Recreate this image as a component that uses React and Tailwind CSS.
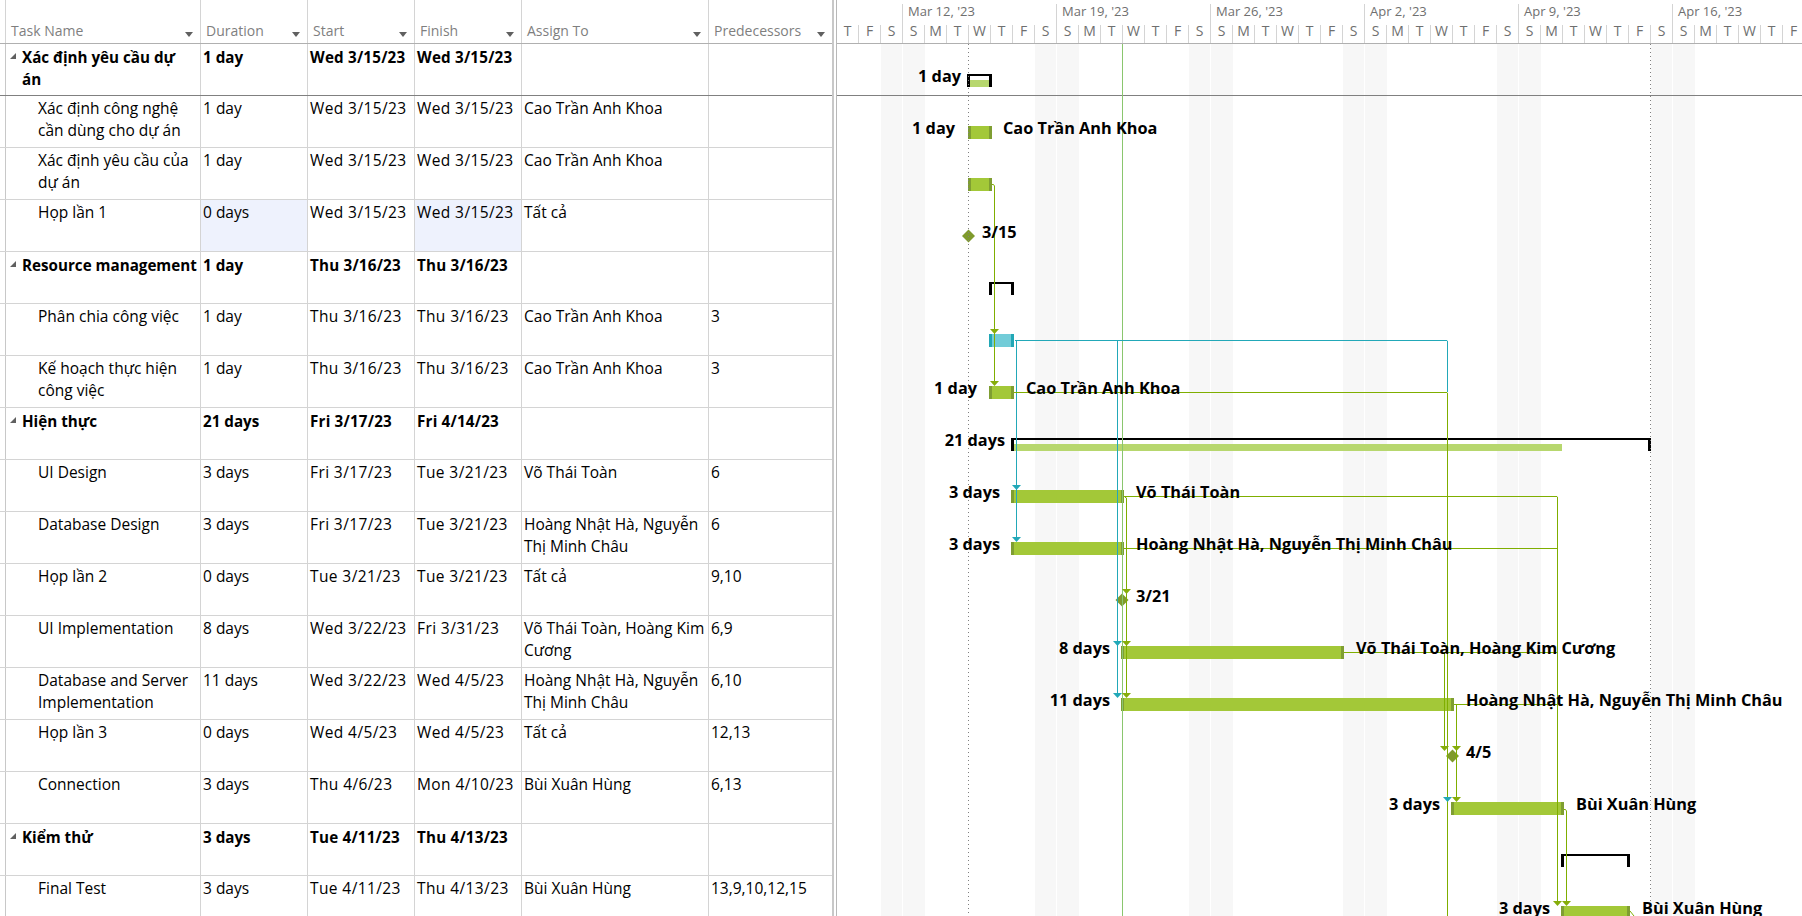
import React from "react";

const font = { fontFamily: '"Open Sans", "Noto Sans", sans-serif' };

const rows = [
  { name: "Xác định yêu cầu dự\nán", dur: "1 day", start: "Wed 3/15/23", end: "Wed 3/15/23", summary: true, strong: true },
  { name: "Xác định công nghệ\ncần dùng cho dự án", dur: "1 day", start: "Wed 3/15/23", end: "Wed 3/15/23", who: "Cao Trần Anh Khoa" },
  { name: "Xác định yêu cầu của\ndự án", dur: "1 day", start: "Wed 3/15/23", end: "Wed 3/15/23", who: "Cao Trần Anh Khoa" },
  { name: "Họp lần 1", dur: "0 days", start: "Wed 3/15/23", end: "Wed 3/15/23", who: "Tất cả", mark: true },
  { name: "Resource management", dur: "1 day", start: "Thu 3/16/23", end: "Thu 3/16/23", summary: true },
  { name: "Phân chia công việc", dur: "1 day", start: "Thu 3/16/23", end: "Thu 3/16/23", who: "Cao Trần Anh Khoa", pre: "3" },
  { name: "Kế hoạch thực hiện\ncông việc", dur: "1 day", start: "Thu 3/16/23", end: "Thu 3/16/23", who: "Cao Trần Anh Khoa", pre: "3" },
  { name: "Hiện thực", dur: "21 days", start: "Fri 3/17/23", end: "Fri 4/14/23", summary: true },
  { name: "UI Design", dur: "3 days", start: "Fri 3/17/23", end: "Tue 3/21/23", who: "Võ Thái Toàn", pre: "6" },
  { name: "Database Design", dur: "3 days", start: "Fri 3/17/23", end: "Tue 3/21/23", who: "Hoàng Nhật Hà, Nguyễn\nThị Minh Châu", pre: "6" },
  { name: "Họp lần 2", dur: "0 days", start: "Tue 3/21/23", end: "Tue 3/21/23", who: "Tất cả", pre: "9,10" },
  { name: "UI Implementation", dur: "8 days", start: "Wed 3/22/23", end: "Fri 3/31/23", who: "Võ Thái Toàn, Hoàng Kim\nCương", pre: "6,9" },
  { name: "Database and Server\nImplementation", dur: "11 days", start: "Wed 3/22/23", end: "Wed 4/5/23", who: "Hoàng Nhật Hà, Nguyễn\nThị Minh Châu", pre: "6,10" },
  { name: "Họp lần 3", dur: "0 days", start: "Wed 4/5/23", end: "Wed 4/5/23", who: "Tất cả", pre: "12,13" },
  { name: "Connection", dur: "3 days", start: "Thu 4/6/23", end: "Mon 4/10/23", who: "Bùi Xuân Hùng", pre: "6,13" },
  { name: "Kiểm thử", dur: "3 days", start: "Tue 4/11/23", end: "Thu 4/13/23", summary: true },
  { name: "Final Test", dur: "3 days", start: "Tue 4/11/23", end: "Thu 4/13/23", who: "Bùi Xuân Hùng", pre: "13,9,10,12,15" },
];

const weeks = ["Mar 12, '23", "Mar 19, '23", "Mar 26, '23", "Apr 2, '23", "Apr 9, '23", "Apr 16, '23"];
const days = ["T", "F", "S", "S", "M", "T", "W", "T", "F", "S", "S", "M", "T", "W", "T", "F", "S", "S", "M", "T", "W", "T", "F", "S", "S", "M", "T", "W", "T", "F", "S", "S", "M", "T", "W", "T", "F", "S", "S", "M", "T", "W", "T", "F"];

const rowTop = (i) => 44 + 52 * i;

const bars = [
  { row: 1, x0: 968, x1: 992 },
  { row: 2, x0: 968, x1: 992 },
  { row: 5, x0: 989, x1: 1014, cyan: true },
  { row: 6, x0: 989, x1: 1014 },
  { row: 8, x0: 1011, x1: 1124 },
  { row: 9, x0: 1011, x1: 1124 },
  { row: 11, x0: 1121, x1: 1344 },
  { row: 12, x0: 1121, x1: 1454 },
  { row: 14, x0: 1451, x1: 1564 },
  { row: 16, x0: 1561, x1: 1630 },
];

const brackets = [
  { row: 0, x0: 967, x1: 992, fill: 989 },
  { row: 4, x0: 989, x1: 1014 },
  { row: 7, x0: 1011, x1: 1651, fill: 1562 },
  { row: 15, x0: 1561, x1: 1630 },
];

const diamonds = [
  [968.5, 236],
  [1122, 600],
  [1452.5, 756],
];

const greenLines = [
  "M992 184.5H993.5L994.5 186V381",
  "M1014 392.5H1447L1447.5 393V916",
  "M1124 496.5H1557L1557.5 497V901",
  "M1125 497.5H1126L1126.5 498V693",
  "M1124 548.5H1557.5",
  "M1344 652.5H1557.5",
  "M1444.5 653V746",
  "M1454 704.5H1557.5",
  "M1456.5 705V797",
  "M1564 809.5H1565.5L1566.5 811V901",
  "M1630 911L1634 916",
];

const cyanLines = [
  "M1015 340.5H1447L1447.5 341V392",
  "M1016.5 341V538",
  "M1117.5 341V693",
];

const greenArrows = [
  [994.5, 334], [994.5, 386], [1126.5, 594], [1126.5, 646], [1126.5, 698],
  [1444.5, 751], [1456.5, 751], [1456.5, 802], [1557.5, 906], [1566.5, 906],
];
const cyanArrows = [[1016.5, 490], [1016.5, 542], [1117.5, 646], [1117.5, 698], [1447.5, 802]];

// labels: side "l" is right-aligned on x, side "r" starts at x
const labels = [
  { row: 0, text: "1 day", x: 961, side: "l" },
  { row: 1, text: "1 day", x: 955, side: "l" },
  { row: 1, text: "Cao Trần Anh Khoa", x: 1003, side: "r" },
  { row: 3, text: "3/15", x: 982, side: "r" },
  { row: 6, text: "1 day", x: 977, side: "l" },
  { row: 6, text: "Cao Trần Anh Khoa", x: 1026, side: "r" },
  { row: 7, text: "21 days", x: 1005, side: "l" },
  { row: 8, text: "3 days", x: 1000, side: "l" },
  { row: 8, text: "Võ Thái Toàn", x: 1136, side: "r" },
  { row: 9, text: "3 days", x: 1000, side: "l" },
  { row: 9, text: "Hoàng Nhật Hà, Nguyễn Thị Minh Châu", x: 1136, side: "r" },
  { row: 10, text: "3/21", x: 1136, side: "r" },
  { row: 11, text: "8 days", x: 1110, side: "l" },
  { row: 11, text: "Võ Thái Toàn, Hoàng Kim Cương", x: 1356, side: "r" },
  { row: 12, text: "11 days", x: 1110, side: "l" },
  { row: 12, text: "Hoàng Nhật Hà, Nguyễn Thị Minh Châu", x: 1466, side: "r" },
  { row: 13, text: "4/5", x: 1466, side: "r" },
  { row: 14, text: "3 days", x: 1440, side: "l" },
  { row: 14, text: "Bùi Xuân Hùng", x: 1576, side: "r" },
  { row: 16, text: "3 days", x: 1550, side: "l" },
  { row: 16, text: "Bùi Xuân Hùng", x: 1642, side: "r" },
];

const Arrow = ({ x, tip, color }) => (
  <polygon points={`${x - 4.5},${tip - 5} ${x + 4.5},${tip - 5} ${x},${tip}`} fill={color} />
);

const HeaderCell = ({ title, className }) => (
  <div className={`flex items-end justify-between h-full pl-[5px] pr-[7px] pb-[1px] border-r border-[#d4d4d4] ${className}`}>
    <span className="text-[#7f7f7f] text-[14px] leading-[22px]">{title}</span>
    <svg width="8" height="5" className="mb-[5px]">
      <polygon points="0,0 8,0 4,5" fill="#606060" />
    </svg>
  </div>
);

const Row = ({ r, index }) => {
  const weight = r.summary ? "font-bold text-[15.2px] pt-[2px]" : "pt-[1px]";
  const dates = r.summary ? "tracking-[0.2px]" : "tracking-[0.4px]";
  const line = index === 0 ? "border-[#808080]" : "border-[#d4d4d4]";
  return (
    <div className={`flex h-[52px] border-b ${line} text-[15.5px] leading-[22px] text-black`}>
      <div className="w-[6px] border-r border-[#c8c8c8]"></div>
      <div className={`w-[195px] border-r border-[#d4d4d4] flex ${weight} ${r.summary ? "pl-[4px]" : "pl-[32px]"}`}>
        {r.summary && (
          <svg width="6" height="6" className="mt-[7px] mr-[6px] shrink-0">
            <polygon points="0,6 6,6 6,0" fill="#606060" />
          </svg>
        )}
        <span className="whitespace-pre">{r.name}</span>
      </div>
      <div className={`w-[107px] pl-[2px] border-r border-[#d4d4d4] ${weight} ${r.mark ? "bg-[#eef2fd]" : ""}`}>{r.dur}</div>
      <div className={`w-[107px] pl-[2px] border-r border-[#d4d4d4] whitespace-nowrap ${weight} ${dates}`}>{r.start}</div>
      <div className={`w-[107px] pl-[2px] border-r border-[#d4d4d4] whitespace-nowrap ${weight} ${dates} ${r.mark ? "bg-[#eef2fd]" : ""}`}>{r.end}</div>
      <div className="w-[187px] pt-[1px] pl-[2px] border-r border-[#d4d4d4] whitespace-pre">{r.who}</div>
      <div className="w-[123px] pt-[1px] pl-[2px]">{r.pre}</div>
    </div>
  );
};

const Chart = () => (
  <svg className="absolute top-0 left-0" width="965" height="916" viewBox="837 0 965 916">
    {brackets.map((b) => {
      const y = rowTop(b.row) + 30;
      return (
        <g key={b.row}>
          {b.fill && <rect x={b.x0 + 3} y={y + 6} width={b.fill - b.x0 - 3} height={7} fill="#b7d76e" />}
          <path d={`M${b.x0} ${y}H${b.x1}V${y + 13}H${b.x1 - 3}V${y + 2}H${b.x0 + 3}V${y + 13}H${b.x0}Z`} fill="#000" />
        </g>
      );
    })}
    {bars.map((b) => {
      const y = rowTop(b.row) + 30;
      const cap = b.cyan ? "#21a7b5" : "#7f9e32";
      return (
        <g key={b.row}>
          <rect x={b.x0} y={y} width={b.x1 - b.x0} height={13} fill={b.cyan ? "#72ccd8" : "#a3c838"} />
          <rect x={b.x0} y={y} width={3} height={13} fill={cap} />
          <rect x={b.x1 - 3} y={y} width={3} height={13} fill={cap} />
        </g>
      );
    })}
    {diamonds.map(([x, y]) => (
      <polygon key={x} points={`${x - 6.5},${y} ${x},${y - 6.5} ${x + 6.5},${y} ${x},${y + 6.5}`} fill="#7f9a2c" />
    ))}
    <path d="M968.5 44V916M1650.5 44V916" stroke="#808080" strokeDasharray="1 3" fill="none" />
    <path d="M1122.5 44V916" stroke="#8ac66e" fill="none" />
    {cyanLines.map((d) => (
      <path key={d} d={d} stroke="#22a8b8" fill="none" />
    ))}
    {greenLines.map((d) => (
      <path key={d} d={d} stroke="#7fae00" fill="none" />
    ))}
    {greenArrows.map(([x, tip]) => (
      <Arrow key={`${x}-${tip}`} x={x} tip={tip} color="#86ad0a" />
    ))}
    {cyanArrows.map(([x, tip]) => (
      <Arrow key={`${x}-${tip}`} x={x} tip={tip} color="#22a8b8" />
    ))}
  </svg>
);

export default function App() {
  return (
    <div className="flex w-[1802px] h-[916px] overflow-hidden bg-white" style={font}>
      <div className="w-[832px] shrink-0">
        <div className="flex h-[44px] border-b border-[#b0b0b0]">
          <div className="w-[6px] border-r border-[#d4d4d4]"></div>
          <HeaderCell title="Task Name" className="w-[195px]" />
          <HeaderCell title="Duration" className="w-[107px]" />
          <HeaderCell title="Start" className="w-[107px]" />
          <HeaderCell title="Finish" className="w-[107px]" />
          <HeaderCell title="Assign To" className="w-[187px]" />
          <HeaderCell title="Predecessors" className="w-[123px] border-r-0" />
        </div>
        {rows.map((r, i) => (
          <Row key={i} r={r} index={i} />
        ))}
      </div>

      <div className="w-[5px] shrink-0 border-r border-[#b8b8b8]">
        <div className="w-[2px] h-full bg-[#c8c8c8]"></div>
      </div>

      <div className="relative flex-1 overflow-hidden">
        <div className="h-[44px] pt-[4px] border-b border-[#b0b0b0] text-[#6f6f6f] text-[13px]">
          <div className="flex h-[19px]">
            <div className="w-[66px] shrink-0 border-r border-[#d4d4d4]"></div>
            {weeks.map((w) => (
              <div key={w} className="w-[154px] shrink-0 pl-[5px] leading-[14px] border-r border-[#d4d4d4] whitespace-nowrap">{w}</div>
            ))}
          </div>
          <div className="flex h-[20px] text-[14px]">
            {days.map((d, i) => (
              <div key={i} className={`w-[22px] shrink-0 text-center leading-[12px] border-r border-[#d4d4d4] ${i % 7 === 2 ? "h-[20px] pt-[2px]" : "h-[18px] mt-[2px]"}`}>{d}</div>
            ))}
          </div>
        </div>

        <div className="absolute top-[44px] left-0 bottom-0 flex">
          {days.map((d, i) => {
            const off = i % 7 === 2 || i % 7 === 3;
            return <div key={i} className={`w-[22px] shrink-0 ${off ? "bg-[#f7f7f7]" : ""} ${i % 7 === 2 ? "border-r border-white" : ""}`}></div>;
          })}
        </div>
        <div className="relative h-[52px] border-b border-[#808080]"></div>

        <Chart />

        {labels.map((l, i) => (
          <span
            key={i}
            className="absolute font-bold text-[16.3px] leading-[20px] text-black whitespace-nowrap"
            style={{
              top: rowTop(l.row) + 22,
              ...(l.side === "l" ? { right: 1802 - l.x } : { left: l.x - 837 }),
            }}
          >
            {l.text}
          </span>
        ))}
      </div>
    </div>
  );
}
